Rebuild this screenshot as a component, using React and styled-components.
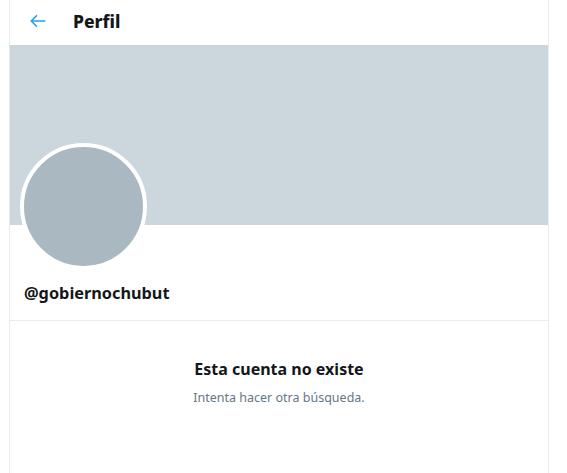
import React from "react";
import styled, { createGlobalStyle } from "styled-components";

const Global = createGlobalStyle`
  html, body { margin: 0; padding: 0; background: #ffffff; }
  body { font-family: "Noto Sans", "Open Sans", sans-serif; color: #14171a; }
`;

const Column = styled.div`
  margin-left: 9px;
  width: 538px;
  min-height: 473px;
  border-left: 1px solid #e6ecf0;
  border-right: 1px solid #e6ecf0;
  display: flex;
  flex-direction: column;
`;

const Header = styled.header`
  height: 45px;
  display: flex;
  align-items: center;
  padding-left: 18px;
  gap: 25px;
`;

const BackButton = styled.button`
  border: none;
  background: none;
  padding: 0;
  width: 20px;
  height: 20px;
  display: flex;
  align-items: center;
  justify-content: center;
  color: #1da1f2;
  cursor: pointer;
  margin-top: -4px;
`;

const Title = styled.h2`
  margin: 0;
  font-size: 17.5px;
  font-weight: 800;
  margin-top: -4px;
`;

const Banner = styled.div`
  height: 180px;
  background: #ccd6dd;
`;

const ProfileSection = styled.section`
  display: flex;
  flex-direction: column;
  padding: 0 14px 0 10px;
  height: 95px;
  border-bottom: 1px solid #e6ecf0;
`;

const Avatar = styled.div`
  width: 119px;
  height: 119px;
  border-radius: 50%;
  background: #aab8c2;
  border: 4px solid #ffffff;
  margin-top: -82px;
`;

const Handle = styled.div`
  margin-top: 12px;
  padding-left: 4px;
  font-size: 16.3px;
  font-weight: 700;
`;

const Empty = styled.div`
  display: flex;
  flex-direction: column;
  align-items: center;
  padding-top: 37px;
`;

const EmptyTitle = styled.div`
  font-size: 16px;
  font-weight: 700;
`;

const EmptyText = styled.div`
  margin-top: 9px;
  font-size: 12.5px;
  color: #657786;
`;

export default function App() {
  return (
    <>
      <Global />
      <Column>
        <Header>
          <BackButton aria-label="Atrás">
            <svg width="18" height="18" viewBox="0 0 24 24" fill="none" stroke="currentColor" strokeWidth="2.2" strokeLinecap="round" strokeLinejoin="round">
              <path d="M21 12H4" />
              <path d="M10 5l-7 7 7 7" />
            </svg>
          </BackButton>
          <Title>Perfil</Title>
        </Header>
        <Banner />
        <ProfileSection>
          <Avatar />
          <Handle>@gobiernochubut</Handle>
        </ProfileSection>
        <Empty>
          <EmptyTitle>Esta cuenta no existe</EmptyTitle>
          <EmptyText>Intenta hacer otra búsqueda.</EmptyText>
        </Empty>
      </Column>
    </>
  );
}
